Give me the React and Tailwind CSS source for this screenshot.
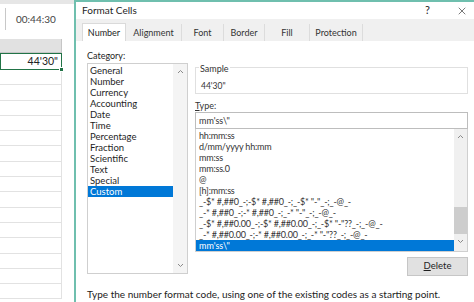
import { X } from 'lucide-react'

const CATEGORIES = [
  'General', 'Number', 'Currency', 'Accounting', 'Date', 'Time',
  'Percentage', 'Fraction', 'Scientific', 'Text', 'Special', 'Custom',
]

const TYPES = [
  'hh:mm:ss',
  'd/mm/yyyy hh:mm',
  'mm:ss',
  'mm:ss.0',
  '@',
  '[h]:mm:ss',
  '_-$* #,##0_-;-$* #,##0_-;_-$* "-"_-;_-@_-',
  '_-* #,##0_-;-* #,##0_-;_-* "-"_-;_-@_-',
  '_-$* #,##0.00_-;-$* #,##0.00_-;_-$* "-"??_-;_-@_-',
  '_-* #,##0.00_-;-* #,##0.00_-;_-* "-"??_-;_-@_-',
]

const TABS = [
  { label: 'Number', w: 'w-[44px]' },
  { label: 'Alignment', w: 'w-[56px]' },
  { label: 'Font', w: 'w-[42px]' },
  { label: 'Border', w: 'w-[41px]' },
  { label: 'Fill', w: 'w-[45px]' },
  { label: 'Protection', w: 'w-[53px]' },
]

function Chevron({ up }) {
  return (
    <svg width="7" height="5" viewBox="0 0 7 5" className="text-[#8a8a8a]">
      <path d={up ? 'M1 4 L3.5 1.5 L6 4' : 'M1 1 L3.5 3.5 L6 1'} fill="none" stroke="currentColor" strokeWidth="1" />
    </svg>
  )
}

function Sheet() {
  return (
    <div className="flex w-[74px] shrink-0 flex-col bg-white">
      <div className="h-[4px] bg-[#e6e6e6]" />
      <div className="flex h-[30px] items-center">
        <div className="ml-[5px] h-[22px] w-px bg-[#c8c8c8]" />
        <span className="ml-[10px] text-[10px] text-[#444]">00:44:30</span>
      </div>
      <div className="mt-[5px] flex h-[14px]">
        <div className="w-[62px] border-b border-r border-[#c6c6c6] bg-[#e1e1e1]" />
      </div>
      <div className="relative flex h-[17px] w-[62px] items-center justify-end border border-[#217346] pr-[3px] text-[10.5px] text-[#222]">
        44'30"
        <div className="absolute -bottom-[3px] -right-[3px] h-[5px] w-[5px] border border-white bg-[#217346]" />
      </div>
      {Array.from({ length: 15 }).map((_, i) => (
        <div key={i} className="h-[15.3px] w-[62px] border-b border-r border-[#e2e2e2]" />
      ))}
    </div>
  )
}

export default function App() {
  return (
    <div
      className="flex h-[302px] w-[474px] overflow-hidden bg-white text-[#1e1e1e]"
      style={{ fontFamily: 'Lato, "Noto Sans", sans-serif' }}
    >
      <Sheet />
      <div className="flex flex-1 flex-col border-l-2 border-t-2 border-[#6fbfae] bg-white">
        <div className="flex h-[20px] items-center pl-[6px] pr-[6px]">
          <span className="text-[10px]">Format Cells</span>
          <span className="ml-auto mr-[26px] text-[11px]">?</span>
          <X size={12} strokeWidth={1.2} />
        </div>
        <div className="flex h-[25px] items-end bg-[#f0f0f0] pl-[6px]">
          {TABS.map((t, i) => (
            <div
              key={t.label}
              className={`flex items-center justify-center text-[9px] ${t.w} ${
                i === 0 ? 'h-[18px] border-x border-t border-[#dadada] bg-white' : 'h-[17px] border-r border-[#dcdcdc] text-[#333]'
              }`}
            >
              {t.label}
            </div>
          ))}
        </div>
        <div className="flex flex-1 flex-col pl-[11px] pr-[6px] pt-[8px]">
          <div className="flex">
            <div className="flex w-[101px] flex-col">
              <span className="h-[14px] text-[9px] leading-[14px]">Category:</span>
              <div className="flex h-[211px] border border-[#cfcfcf]">
                <div className="flex flex-1 flex-col pt-[1px]">
                  {CATEGORIES.map((c) => (
                    <div
                      key={c}
                      className={`h-[11px] pl-[2px] text-[9.5px] leading-[11px] ${
                        c === 'Custom' ? 'bg-[#0078d7] text-white' : ''
                      }`}
                    >
                      {c}
                    </div>
                  ))}
                </div>
                <div className="flex w-[14px] flex-col items-center justify-between bg-[#f4f4f4] py-[5px]">
                  <Chevron up />
                  <Chevron />
                </div>
              </div>
            </div>
            <div className="ml-[7px] flex flex-1 flex-col">
              <div className="relative mt-[18px] h-[27px] border border-[#e0e0e0] pl-[5px]">
                <span className="absolute -top-[6px] left-[3px] bg-white px-[1px] text-[9px] text-[#333]">Sample</span>
                <div className="pt-[12px] text-[8.5px] leading-[12px] text-[#333]">44'30"</div>
              </div>
              <span className="mt-[6px] h-[12px] text-[9px] leading-[12px] text-[#333]">
                <span className="underline">T</span>ype:
              </span>
              <div className="flex h-[17px] items-center border border-[#bdbdbd] pl-[3px] text-[9px] text-[#333]">
                mm'ss\"
              </div>
              <div className="flex h-[123px] border-x border-b border-[#cfcfcf]">
                <div className="flex flex-1 flex-col pt-[1px]">
                  {TYPES.map((t) => (
                    <div key={t} className="h-[11px] whitespace-nowrap pl-[3px] text-[9px] leading-[11px] tracking-[-0.2px] text-[#333]">
                      {t}
                    </div>
                  ))}
                  <div className="h-[11px] bg-[#0078d7] pl-[3px] text-[9px] leading-[11px] text-white">mm'ss\"</div>
                </div>
                <div className="flex w-[13px] flex-col items-center bg-[#f0f0f0] pt-[5px]">
                  <Chevron up />
                  <div className="mt-[68px] h-[27px] w-[13px] bg-[#cdcdcd]" />
                  <div className="mt-[5px]"><Chevron /></div>
                </div>
              </div>
              <div className="mt-[5px] flex justify-end">
                <div className="flex h-[19px] w-[61px] items-center justify-center border border-[#c6c6c6] bg-[#e1e1e1] text-[9.5px]">
                  <span className="underline">D</span>elete
                </div>
              </div>
            </div>
          </div>
          <div className="mt-[11px] whitespace-nowrap text-[10px] text-[#222]">
            Type the number format code, using one of the existing codes as a starting point.
          </div>
        </div>
      </div>
    </div>
  )
}
